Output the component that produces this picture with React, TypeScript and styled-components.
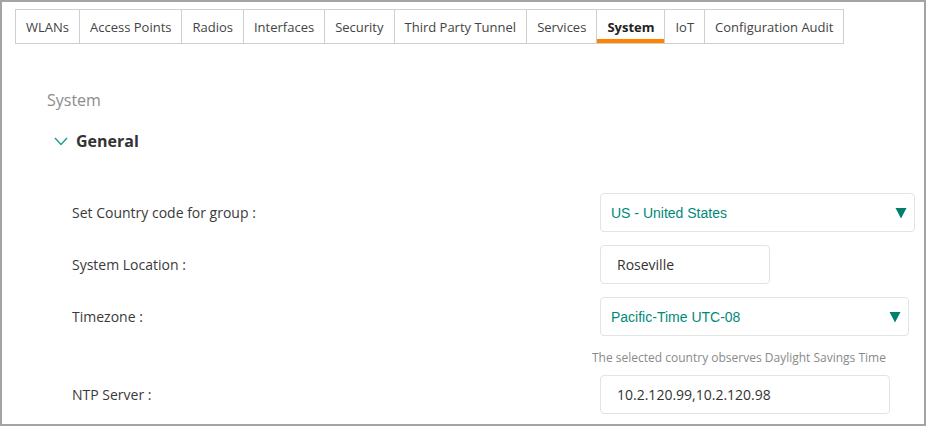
import React from "react";
import styled, { createGlobalStyle } from "styled-components";

const GlobalStyle = createGlobalStyle`
  html, body { margin: 0; padding: 0; background: #fff; }
  body { font-family: "Open Sans", "Liberation Sans", sans-serif; }
  * { box-sizing: border-box; }
`;

const Frame = styled.div`
  width: 926px;
  height: 426px;
  border: 2px solid #a4a4a4;
  padding: 7px 0 0 13px;
  overflow: hidden;
  background: #fff;
  display: flex;
  flex-direction: column;
`;

const TabBar = styled.div`
  display: flex;
  height: 35px;
`;

const Tab = styled.div<{ $active?: boolean }>`
  position: relative;
  height: 35px;
  padding: 0 10px;
  margin-left: -1px;
  border: 1px solid #cfcfcf;
  display: flex;
  align-items: center;
  font-size: 13px;
  color: ${(p) => (p.$active ? "#222" : "#444")};
  font-weight: ${(p) => (p.$active ? 700 : 400)};
  white-space: nowrap;
  &:first-child { margin-left: 0; }
  &::after {
    content: "";
    display: ${(p) => (p.$active ? "block" : "none")};
    position: absolute;
    left: 0;
    right: 0;
    bottom: 0;
    height: 4px;
    background: #ff8300;
  }
`;

const Content = styled.div`
  padding-left: 32px;
  display: flex;
  flex-direction: column;
`;

const SectionTitle = styled.div`
  margin-top: 45px;
  font-size: 16px;
  line-height: 22px;
  color: #8c8c8c;
`;

const GroupHeader = styled.div`
  margin-top: 19px;
  margin-left: 7px;
  display: flex;
  align-items: center;
  gap: 8px;
  font-size: 16px;
  line-height: 22px;
  font-weight: 700;
  color: #333;
`;

const Form = styled.div`
  margin-top: 41px;
  margin-left: 25px;
  display: grid;
  grid-template-columns: 528px 324px;
  row-gap: 13px;
  align-items: center;
`;

const Label = styled.div`
  font-size: 14px;
  color: #3a3a3a;
`;

const Select = styled.div<{ $w: number }>`
  width: ${(p) => p.$w}px;
  height: 39px;
  border: 1px solid #e3e3e3;
  border-radius: 4px;
  padding: 0 7px 0 10px;
  display: flex;
  align-items: center;
  justify-content: space-between;
  font-family: "Liberation Sans", Arial, sans-serif;
  font-size: 14px;
  color: #00897a;
`;

const Input = styled.div<{ $w: number }>`
  width: ${(p) => p.$w}px;
  height: 39px;
  border: 1px solid #e3e3e3;
  border-radius: 4px;
  padding: 0 16px;
  display: flex;
  align-items: center;
  font-size: 14px;
  color: #333;
`;

const Hint = styled.div`
  grid-column: 2;
  margin-left: -8px;
  margin-top: 0;
  margin-bottom: -4px;
  font-size: 12px;
  line-height: 17px;
  color: #8a8a8a;
  white-space: nowrap;
`;

const Triangle = () => (
  <svg width="12" height="12" viewBox="0 0 12 12">
    <polygon points="0.5,1 11.5,1 6,11.5" fill="#00806c" />
  </svg>
);

const Chevron = () => (
  <svg width="14" height="9" viewBox="0 0 14 9">
    <polyline points="1,1 7,7.5 13,1" fill="none" stroke="#1a9a86" strokeWidth="1.3" />
  </svg>
);

const tabs = [
  "WLANs",
  "Access Points",
  "Radios",
  "Interfaces",
  "Security",
  "Third Party Tunnel",
  "Services",
  "System",
  "IoT",
  "Configuration Audit",
];

export default function App() {
  return (
    <>
      <GlobalStyle />
      <Frame>
        <TabBar>
          {tabs.map((t) => (
            <Tab key={t} $active={t === "System"}>
              {t}
            </Tab>
          ))}
        </TabBar>
        <Content>
          <SectionTitle>System</SectionTitle>
          <GroupHeader>
            <Chevron />
            General
          </GroupHeader>
          <Form>
            <Label>Set Country code for group :</Label>
            <Select $w={315}>
              <span>US - United States</span>
              <Triangle />
            </Select>
            <Label>System Location :</Label>
            <Input $w={170}>Roseville</Input>
            <Label>Timezone :</Label>
            <Select $w={309}>
              <span>Pacific-Time UTC-08</span>
              <Triangle />
            </Select>
            <Hint>The selected country observes Daylight Savings Time</Hint>
            <Label>NTP Server :</Label>
            <Input $w={290}>10.2.120.99,10.2.120.98</Input>
          </Form>
        </Content>
      </Frame>
    </>
  );
}
